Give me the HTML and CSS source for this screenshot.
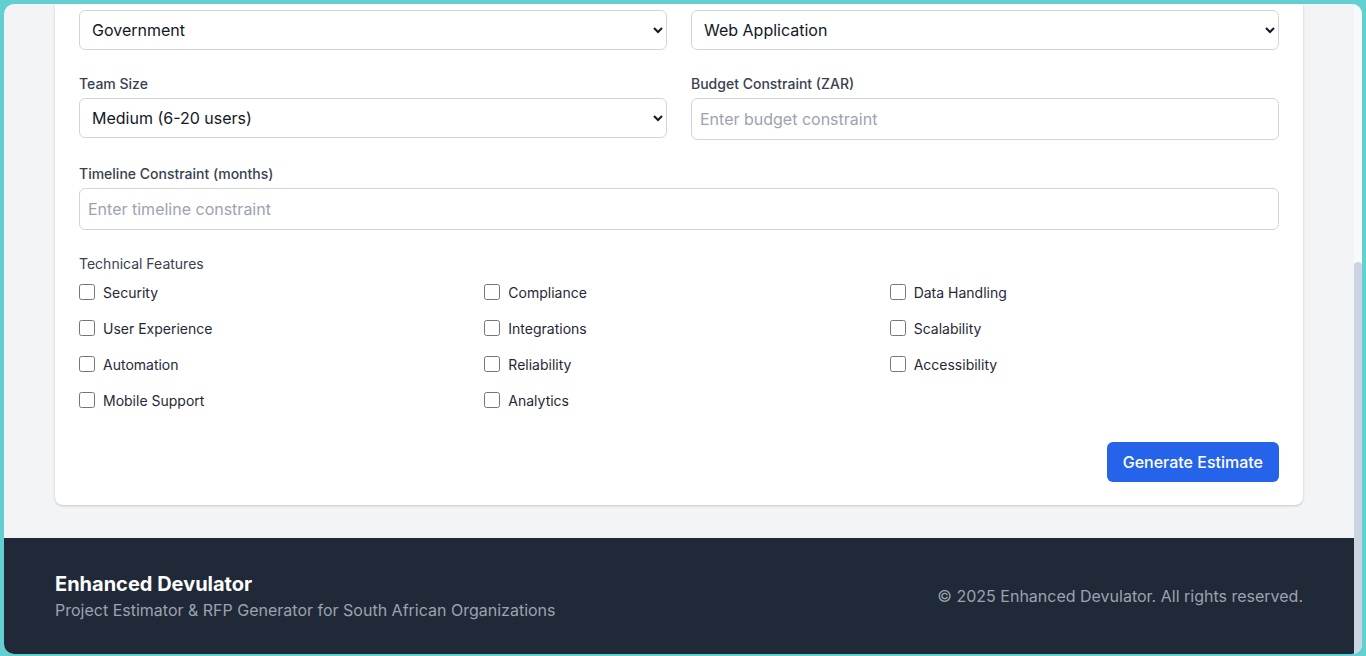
FILE: index.html
```html
<!DOCTYPE html>
<html lang="en">
<head>
<meta charset="utf-8">
<title>Enhanced Devulator</title>
<link rel="stylesheet" href="styles.css">
</head>
<body>
<div class="frame">
  <div class="window">
    <div class="viewport">
      <main class="main">
        <section class="card">
          <div class="form-grid">
            <div class="field">
              <select class="select">
                <option>Government</option>
                <option>Private</option>
                <option>Non-profit</option>
              </select>
            </div>
            <div class="field">
              <select class="select">
                <option>Web Application</option>
                <option>Mobile Application</option>
              </select>
            </div>
            <div class="field">
              <label class="label">Team Size</label>
              <select class="select">
                <option>Medium (6-20 users)</option>
                <option>Small (1-5 users)</option>
                <option>Large (21+ users)</option>
              </select>
            </div>
            <div class="field">
              <label class="label">Budget Constraint (ZAR)</label>
              <input class="input" type="text" placeholder="Enter budget constraint">
            </div>
            <div class="field span-2">
              <label class="label">Timeline Constraint (months)</label>
              <input class="input" type="text" placeholder="Enter timeline constraint">
            </div>
          </div>

          <div class="features">
            <div class="label features-label">Technical Features</div>
            <div class="feature-grid">
              <label class="check"><input type="checkbox"><span>Security</span></label>
              <label class="check"><input type="checkbox"><span>Compliance</span></label>
              <label class="check"><input type="checkbox"><span>Data Handling</span></label>
              <label class="check"><input type="checkbox"><span>User Experience</span></label>
              <label class="check"><input type="checkbox"><span>Integrations</span></label>
              <label class="check"><input type="checkbox"><span>Scalability</span></label>
              <label class="check"><input type="checkbox"><span>Automation</span></label>
              <label class="check"><input type="checkbox"><span>Reliability</span></label>
              <label class="check"><input type="checkbox"><span>Accessibility</span></label>
              <label class="check"><input type="checkbox"><span>Mobile Support</span></label>
              <label class="check"><input type="checkbox"><span>Analytics</span></label>
            </div>
          </div>

          <div class="actions">
            <button class="btn" type="button">Generate Estimate</button>
          </div>
        </section>
      </main>

      <footer class="footer">
        <div class="footer-inner">
          <div class="brand">
            <div class="brand-title">Enhanced Devulator</div>
            <div class="brand-sub">Project Estimator &amp; RFP Generator for South African Organizations</div>
          </div>
          <div class="copy">&copy; 2025 Enhanced Devulator. All rights reserved.</div>
        </div>
      </footer>
    </div>
    <div class="scrollbar"><div class="thumb"></div></div>
  </div>
</div>
</body>
</html>
```

FILE: styles.css
```css
* { box-sizing: border-box; }

html, body {
  margin: 0;
  height: 100%;
}

body {
  background: #62d0d1;
  font-family: Inter, "Noto Sans", "Liberation Sans", sans-serif;
  color: #1f2937;
  overflow: hidden;
}

.frame {
  height: 656px;
  padding: 4px 4px 2px 4px;
}

.window {
  height: 650px;
  border-radius: 10px;
  overflow: hidden;
  display: flex;
  background: #f3f4f6;
}

.viewport {
  flex: 1;
  display: flex;
  flex-direction: column;
  min-width: 0;
}

.main {
  width: 1248px;
  margin: 0 auto;
}

.card {
  background: #ffffff;
  border-radius: 0 0 8px 8px;
  box-shadow: 0 1px 3px rgba(0, 0, 0, 0.12), 0 1px 2px rgba(0, 0, 0, 0.08);
  padding: 6px 24px 23px 24px;
}

.form-grid {
  display: grid;
  grid-template-columns: 1fr 1fr;
  column-gap: 24px;
  row-gap: 24px;
}

.span-2 { grid-column: span 2; }

.field {
  display: flex;
  flex-direction: column;
}

.label {
  display: block;
  font-size: 14px;
  line-height: 20px;
  font-weight: 500;
  color: #374151;
  margin-bottom: 4px;
}

.select {
  height: 40px;
  width: 100%;
  font-family: inherit;
  font-size: 16px;
  color: #111827;
  background: #ffffff;
  border: 1px solid #d1d5db;
  border-radius: 6px;
  padding: 0 8px;
  margin: 0;
}

.input {
  height: 42px;
  width: 100%;
  font-family: inherit;
  font-size: 16px;
  color: #111827;
  background: #ffffff;
  border: 1px solid #d1d5db;
  border-radius: 6px;
  padding: 0 8px;
  margin: 0;
  outline: none;
}

.input::placeholder { color: #9ca3af; }

.features {
  margin-top: 24px;
}

.features-label {
  font-weight: 400;
  margin-bottom: 8px;
}

.feature-grid {
  display: grid;
  grid-template-columns: repeat(3, 1fr);
  column-gap: 16px;
  row-gap: 16px;
}

.check {
  display: flex;
  align-items: center;
  gap: 8px;
  height: 20px;
  font-size: 14px;
  color: #1f2937;
}

.check input {
  width: 16px;
  height: 16px;
  margin: 0;
}

.actions {
  display: flex;
  justify-content: flex-end;
  margin-top: 32px;
}

.btn {
  height: 40px;
  padding: 0 16px;
  background: #2563eb;
  color: #ffffff;
  border: none;
  border-radius: 6px;
  font-family: inherit;
  font-size: 16px;
  font-weight: 500;
}

.footer {
  margin-top: 33px;
  background: #1f2937;
  flex: 1;
  padding: 32px 0;
}

.footer-inner {
  width: 1248px;
  margin: 0 auto;
  display: flex;
  justify-content: space-between;
  align-items: center;
}

.brand-title {
  font-size: 20px;
  line-height: 28px;
  font-weight: 700;
  color: #ffffff;
}

.brand-sub {
  font-size: 16px;
  line-height: 24px;
  color: #9ca3af;
}

.copy {
  font-size: 16px;
  line-height: 24px;
  color: #9ca3af;
}

.scrollbar {
  width: 8px;
  background: #f8fafc;
  display: flex;
  flex-direction: column;
  justify-content: flex-end;
}

.thumb {
  height: 392px;
  background: #cbd5e1;
  border-radius: 4px 4px 0 0;
}
```
